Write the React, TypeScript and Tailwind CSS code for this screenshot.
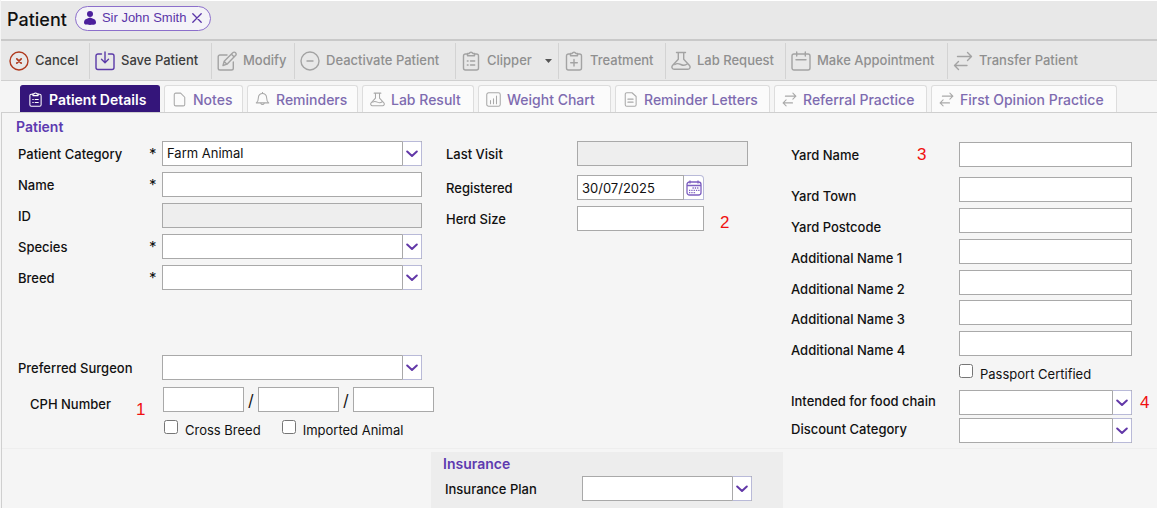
import React from "react";

type IconName =
  | "cancel"
  | "save"
  | "edit"
  | "minus"
  | "clipboard"
  | "treatment"
  | "flask"
  | "calendar"
  | "transfer"
  | "page"
  | "bell"
  | "chart"
  | "letter";

const icons: Record<IconName, React.ReactNode> = {
  cancel: (
    <>
      <circle cx="10" cy="10" r="9" />
      <path d="M7.8 7.8l4.4 4.4M12.2 7.8l-4.4 4.4" strokeWidth="1.7" />
    </>
  ),
  save: (
    <>
      <path d="M6.5 3H3a2 2 0 0 0-2 2v11.5a2 2 0 0 0 2 2h14a2 2 0 0 0 2-2V5a2 2 0 0 0-2-2h-3.5" />
      <path d="M10 1v10.5M6.5 8.2l3.5 3.5 3.5-3.5" />
    </>
  ),
  edit: (
    <>
      <path d="M10 4H3a1.800 1.800 0 0 0-1.800 1.800v11.400A1.800 1.800 0 0 0 3 19h11.500a1.800 1.800 0 0 0 1.800-1.800V11" />
      <path d="M6 14.500l1.200-4.200L16 1.600a1.600 1.600 0 0 1 2.300 0l.4.400a1.600 1.600 0 0 1 0 2.300L10 13.200z M14.500 3.200l2.700 2.700M7.200 10.500l2.700 2.700" />
    </>
  ),
  minus: (
    <>
      <circle cx="10" cy="10" r="9" />
      <path d="M7 10h6" />
    </>
  ),
  clipboard: (
    <>
      <path d="M6.500 3H4.500a2 2 0 0 0-2 2v12a2 2 0 0 0 2 2h11a2 2 0 0 0 2-2V5a2 2 0 0 0-2-2h-2" />
      <path d="M6.500 4.800V2.500h1.700a1.900 1.900 0 0 1 3.600 0h1.700v2.300z" />
      <path d="M6.300 10h.8M9.500 10h4.200M6.300 14h.8M9.500 14h4.200" />
    </>
  ),
  treatment: (
    <>
      <path d="M6.500 3H4.500a2 2 0 0 0-2 2v12a2 2 0 0 0 2 2h11a2 2 0 0 0 2-2V5a2 2 0 0 0-2-2h-2" />
      <path d="M6.500 4.800V2.500h1.700a1.900 1.900 0 0 1 3.600 0h1.700v2.300z" />
      <path d="M10 8.500v6.600M6.700 11.800h6.600" />
    </>
  ),
  flask: (
    <>
      <path d="M5.500 1.500h9M7.300 1.500v6.800l-5.800 6.200a2.300 2.300 0 0 0 1.700 3.800h13.600a2.300 2.300 0 0 0 1.700-3.800l-5.800-6.200V1.500" />
      <path d="M3.800 13.500c2-1.500 4-1 6 0s4.400 1.200 6.400-.5" />
    </>
  ),
  calendar: (
    <>
      <rect x="1" y="3" width="18" height="16" rx="2" />
      <path d="M5.700 1v4M14.300 1v4M5 8.800h10" />
    </>
  ),
  transfer: (
    <path d="M4.500 5.500h14M14.500 1.500l4 4-4 4M14 14.500H1.500M5.500 10.500l-4 4 4 4" />
  ),
  page: <path d="M5 1.500h6.500l5.500 5.500v9.500a2 2 0 0 1-2 2H5a2 2 0 0 1-2-2v-13a2 2 0 0 1 2-2z" />,
  bell: (
    <>
      <path d="M10 2a5.500 5.500 0 0 0-5.500 5.500c0 4-1 5.500-2.800 7h16.600c-1.800-1.500-2.800-3-2.800-7A5.500 5.500 0 0 0 10 2z" />
      <path d="M10 .5V2M7.800 15a2.300 2.300 0 0 0 4.400 0" />
    </>
  ),
  chart: (
    <>
      <rect x="1" y="1" width="18" height="18" rx="2.5" />
      <path d="M6 15.500v-4M10 15.500V9M14 15.500v-10" />
    </>
  ),
  letter: (
    <>
      <path d="M5 1h7l5.500 5v11a2 2 0 0 1-2 2H5a2 2 0 0 1-2-2V3a2 2 0 0 1 2-2z" />
      <path d="M6.500 9.500h7M6.500 13.500h7" />
    </>
  ),
};

const Icon: React.FC<{ name: IconName; className: string }> = ({ name, className }) => (
  <svg
    viewBox="0 0 20 20"
    fill="none"
    stroke="currentColor"
    strokeWidth="1.4"
    strokeLinecap="round"
    strokeLinejoin="round"
    className={`shrink-0 ${className}`}
    aria-hidden="true"
  >
    {icons[name]}
  </svg>
);

interface ToolbarItem {
  label: string;
  icon: IconName;
  width: string;
  iconColor?: string;
  enabled?: boolean;
  menu?: boolean;
}

const toolbar: ToolbarItem[] = [
  { label: "Cancel", icon: "cancel", width: "w-[86px]", iconColor: "text-[#b03a1e]", enabled: true },
  { label: "Save Patient", icon: "save", width: "w-[122px]", iconColor: "text-[#5b3aa8]", enabled: true },
  { label: "Modify", icon: "edit", width: "w-[83px]" },
  { label: "Deactivate Patient", icon: "minus", width: "w-[161px]" },
  { label: "Clipper", icon: "clipboard", width: "w-[103px]", menu: true },
  { label: "Treatment", icon: "treatment", width: "w-[107px]" },
  { label: "Lab Request", icon: "flask", width: "w-[120px]" },
  { label: "Make Appointment", icon: "calendar", width: "w-[162px]" },
  { label: "Transfer Patient", icon: "transfer", width: "w-[150px]" },
];

const tabs: { label: string; icon: IconName; width: string }[] = [
  { label: "Patient Details", icon: "clipboard", width: "w-[140px]" },
  { label: "Notes", icon: "page", width: "w-[79px]" },
  { label: "Reminders", icon: "bell", width: "w-[111px]" },
  { label: "Lab Result", icon: "flask", width: "w-[112px]" },
  { label: "Weight Chart", icon: "chart", width: "w-[133px]" },
  { label: "Reminder Letters", icon: "letter", width: "w-[155px]" },
  { label: "Referral Practice", icon: "transfer", width: "w-[153px]" },
  { label: "First Opinion Practice", icon: "transfer", width: "w-[186px]" },
];

interface RowProps {
  id: string;
  label: string;
  labelWidth: string;
  labelClass?: string;
  required?: boolean;
  note?: string;
  className?: string;
  children: React.ReactNode;
}

const Row: React.FC<RowProps> = ({ id, label, labelWidth, labelClass = "", required, note, className = "", children }) => (
  <div className={`relative flex h-[25px] items-center ${className}`}>
    <div className={`flex shrink-0 items-center justify-between ${labelWidth}`}>
      <label htmlFor={id} className={`whitespace-nowrap leading-5 ${labelClass}`}>
        {label}
      </label>
      {required && <span className="w-[13px] text-[15px] font-normal leading-5">*</span>}
      {note && <Note text={note} className="w-[42px]" />}
    </div>
    {children}
  </div>
);

const Note: React.FC<{ text: string; className?: string }> = ({ text, className = "" }) => (
  <span className={`font-['Liberation_Sans',sans-serif] text-[17px] font-normal leading-5 text-[#f01010] ${className}`}>{text}</span>
);

const inputStyle = "h-[25px] min-w-0 border border-[#a9a9a9] px-1 outline-none";

const TextBox: React.FC<{ id: string; className?: string; disabled?: boolean; label?: string }> = ({
  id,
  className = "flex-1",
  disabled,
  label,
}) => (
  <input
    id={id}
    type="text"
    aria-label={label}
    disabled={disabled}
    className={`${inputStyle} ${className} ${disabled ? "bg-[#eeeeee]" : "bg-white"}`}
  />
);

const Dropdown: React.FC<{ id: string; value?: string }> = ({ id, value = "" }) => (
  <div className="relative min-w-0 flex-1">
    <select id={id} defaultValue={value} className={`${inputStyle} block w-full appearance-none bg-white pr-6 font-normal`}>
      <option value={value}>{value}</option>
    </select>
    <span className="pointer-events-none absolute inset-y-0 right-0 flex w-5 items-center justify-center rounded-r-xs border border-l-[#a9a9a9] border-[#b9bad8] bg-white">
      <svg viewBox="0 0 12 8" className="h-2 w-3" fill="none" stroke="#6238a8" strokeWidth="2" strokeLinecap="round" strokeLinejoin="round">
        <path d="M1.200 1.500L6 6l4.800-4.500" />
      </svg>
    </span>
  </div>
);

const CheckBox: React.FC<{ id: string; label: string }> = ({ id, label }) => (
  <div className="flex items-start">
    <input id={id} type="checkbox" className="size-[14px] shrink-0" />
    <label htmlFor={id} className="ml-[7px] whitespace-nowrap font-normal leading-5">
      {label}
    </label>
  </div>
);

const columns = "grid grid-cols-[minmax(0,429fr)_minmax(0,352fr)_minmax(0,374fr)]";

const App: React.FC = () => {
  return (
    <div className="flex min-h-screen flex-col bg-[#f5f5f5] pl-px font-['Inter',sans-serif] text-[13px] font-medium text-[#111111]">
      <header className="flex h-[41px] items-center border-t border-b-2 border-t-white border-b-[#c9c9c9] bg-[#e8e8e8] pl-[6px]">
        <h1 className="text-[18px] font-medium leading-6">Patient</h1>
        <div className="mb-1 ml-2 flex h-[25px] items-center rounded-full border border-[#8c6fcb] bg-[#f4f3f8] px-2 font-['Liberation_Sans',sans-serif] font-normal text-[#5a35a8]">
          <svg viewBox="0 0 12 14" className="h-[14px] w-3" fill="#4b1f9c">
            <circle cx="6" cy="3" r="3" />
            <path d="M6 6.500c1 0 1.500.8 3 1.200C11 8.300 12 9.500 12 11.500c0 1-.5 1.700-1.500 2-1.400.5-7.600.5-9 0-1-.3-1.500-1-1.500-2 0-2 1-3.200 3-3.800 1.500-.4 2-1.200 3-1.200z" />
          </svg>
          <span className="ml-[6px] whitespace-nowrap">Sir John Smith</span>
          <button type="button" aria-label="Close" className="ml-[6px]">
            <svg viewBox="0 0 10 10" className="size-[10px]" fill="none" stroke="currentColor" strokeWidth="1.3" strokeLinecap="round">
              <path d="M.8.8l8.400 8.400M9.200.8L.8 9.200" />
            </svg>
          </button>
        </div>
      </header>

      <div role="toolbar" className="flex h-10 items-center border-b border-[#d0d0d0] bg-[#e8e8e8] pl-[2px]">
        {toolbar.map((item, i) => (
          <button
            key={item.label}
            type="button"
            disabled={!item.enabled}
            className={`flex h-9 shrink-0 items-center gap-[6px] whitespace-nowrap text-[13px] ${i === 0 ? "pl-[6px]" : "border-l border-[#d3d3d3] pl-[5px]"} ${item.width} ${item.enabled ? "text-[#3c3c3c]" : "text-[#8f8f8f]"}`}
          >
            <Icon name={item.icon} className={`size-5 ${item.iconColor ?? "text-[#a3a3a3]"}`} />
            {item.label}
            {item.menu && (
              <svg viewBox="0 0 7 4" className="ml-[7px] h-1 w-[7px]" fill="#555555">
                <path d="M0 0h7L3.500 4z" />
              </svg>
            )}
          </button>
        ))}
      </div>

      <div role="tablist" className="flex items-end gap-1 border-b border-[#cfcfcf] pl-[19px] pt-1">
        {tabs.map((tab, i) => (
          <button
            key={tab.label}
            type="button"
            role="tab"
            aria-selected={i === 0}
            className={`flex h-[27px] shrink-0 items-center gap-[6px] whitespace-nowrap rounded-t-[3px] border border-b-0 pl-[7px] text-[14px] ${tab.width} ${
              i === 0 ? "border-[#34157a] bg-[#34157a] font-semibold text-white" : "border-[#dddddd] bg-[#fbfbfb] text-[#7e6bb0]"
            }`}
          >
            <Icon name={tab.icon} className={`size-[15px] ${i === 0 ? "text-white" : "text-[#a9a9a9]"}`} />
            {tab.label}
          </button>
        ))}
      </div>

      <main className="flex flex-1 flex-col border-l border-[#cfcfcf]">
        <section className="border-b border-[#eeeeee] pb-[5px]">
          <h2 className="pl-[14px] pt-1 text-[14px] font-semibold leading-5 text-[#5d3ab0]">Patient</h2>
          <div className={`${columns} pt-1`}>
            <div className="flex flex-col gap-[6px] pl-4 pr-[9px]">
              <Row id="category" label="Patient Category" labelWidth="w-[144px]" required>
                <Dropdown id="category" value="Farm Animal" />
              </Row>
              <Row id="name" label="Name" labelWidth="w-[144px]" required>
                <TextBox id="name" />
              </Row>
              <Row id="patient-id" label="ID" labelWidth="w-[144px]">
                <TextBox id="patient-id" disabled />
              </Row>
              <Row id="species" label="Species" labelWidth="w-[144px]" required>
                <Dropdown id="species" />
              </Row>
              <Row id="breed" label="Breed" labelWidth="w-[144px]" required>
                <Dropdown id="breed" />
              </Row>
              <Row id="surgeon" label="Preferred Surgeon" labelWidth="w-[144px]" className="mt-[59px]">
                <Dropdown id="surgeon" />
              </Row>
              <div className="-mr-3 mt-px flex h-[25px] items-center">
                <div className="flex w-[145px] shrink-0 items-center justify-between pl-3 pt-2">
                  <label htmlFor="cph-1" className="leading-5">
                    CPH Number
                  </label>
                  <Note text="1" className="w-[27px] pt-3" />
                </div>
                <TextBox id="cph-1" />
                <span className="w-[14px] text-center text-[16px] font-normal">/</span>
                <TextBox id="cph-2" label="CPH Number part 2" />
                <span className="w-[14px] text-center text-[16px] font-normal">/</span>
                <TextBox id="cph-3" label="CPH Number part 3" />
              </div>
              <div className="mt-[2px] flex gap-[21px] pl-[146px]">
                <CheckBox id="cross-breed" label="Cross Breed" />
                <CheckBox id="imported" label="Imported Animal" />
              </div>
            </div>

            <div className="flex flex-col gap-[6px] pl-[15px] pr-[35px]">
              <Row id="last-visit" label="Last Visit" labelWidth="w-[131px]">
                <TextBox id="last-visit" disabled />
              </Row>
              <Row id="registered" label="Registered" labelWidth="w-[131px]" className="mt-[3px]">
                <input
                  id="registered"
                  type="text"
                  defaultValue="30/07/2025"
                  className={`${inputStyle} w-[107px] bg-white font-normal`}
                />
                <button
                  type="button"
                  aria-label="Choose date"
                  className="flex h-[25px] w-5 items-center justify-center rounded-tr-sm border border-l-0 border-[#b9bad8] bg-white text-[#7d5fc0]"
                >
                  <svg viewBox="0 0 16 16" className="size-4" fill="none" stroke="currentColor" strokeWidth="1.3">
                    <rect x="1" y="2" width="14" height="13" rx="2.5" />
                    <path d="M4 .5v3M12 .5v3M1 5.500h14" />
                    <path d="M6.500 8h7M3 10.300h10.500M3 12.600h7" strokeDasharray="1.3 1" />
                  </svg>
                </button>
              </Row>
              <Row id="herd-size" label="Herd Size" labelWidth="w-[131px]">
                <TextBox id="herd-size" className="w-[127px]" />
                <Note text="2" className="ml-4 pt-2" />
              </Row>
            </div>

            <div className="flex flex-col gap-[6px] pl-2 pr-[25px] pt-px">
              <Row id="yard-name" label="Yard Name" labelWidth="w-[168px]" note="3">
                <TextBox id="yard-name" />
              </Row>
              <Row id="yard-town" label="Yard Town" labelWidth="w-[168px]" labelClass="pt-3" className="mt-1">
                <TextBox id="yard-town" />
              </Row>
              <Row id="yard-postcode" label="Yard Postcode" labelWidth="w-[168px]" labelClass="pt-3">
                <TextBox id="yard-postcode" />
              </Row>
              <Row id="additional-1" label="Additional Name 1" labelWidth="w-[168px]" labelClass="pt-3">
                <TextBox id="additional-1" />
              </Row>
              <Row id="additional-2" label="Additional Name 2" labelWidth="w-[168px]" labelClass="pt-3">
                <TextBox id="additional-2" />
              </Row>
              <Row id="additional-3" label="Additional Name 3" labelWidth="w-[168px]" labelClass="pt-3" className="-mt-px">
                <TextBox id="additional-3" />
              </Row>
              <Row id="additional-4" label="Additional Name 4" labelWidth="w-[168px]" labelClass="pt-3">
                <TextBox id="additional-4" />
              </Row>
              <div className="mt-[2px] pl-[168px]">
                <CheckBox id="passport" label="Passport Certified" />
              </div>
              <Row id="food-chain" label="Intended for food chain" labelWidth="w-[168px]" labelClass="pb-1">
                <Dropdown id="food-chain" />
                <Note text="4" className="absolute left-full ml-2" />
              </Row>
              <Row id="discount" label="Discount Category" labelWidth="w-[168px]" labelClass="pb-1" className="-mt-[3px]">
                <Dropdown id="discount" />
              </Row>
            </div>
          </div>
        </section>

        <div className={`${columns} flex-1 pt-[3px]`}>
          <section className="col-start-2 bg-[#ededed] pl-[14px] pr-[31px]">
            <h2 className="-ml-[2px] pt-[2px] text-[14px] font-semibold leading-5 text-[#5d3ab0]">Insurance</h2>
            <Row id="insurance-plan" label="Insurance Plan" labelWidth="w-[137px]" className="mt-[2px]">
              <Dropdown id="insurance-plan" />
            </Row>
          </section>
        </div>
      </main>
    </div>
  );
};

export default App;
